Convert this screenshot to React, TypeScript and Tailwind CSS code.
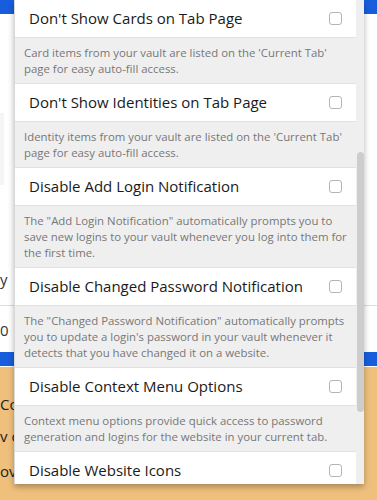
import React from "react";

const rows: { title: string; desc: string[] }[] = [
  {
    title: "Don't Show Cards on Tab Page",
    desc: ["Card items from your vault are listed on the 'Current Tab'", "page for easy auto-fill access."],
  },
  {
    title: "Don't Show Identities on Tab Page",
    desc: ["Identity items from your vault are listed on the 'Current Tab'", "page for easy auto-fill access."],
  },
  {
    title: "Disable Add Login Notification",
    desc: [
      "The \"Add Login Notification\" automatically prompts you to",
      "save new logins to your vault whenever you log into them for",
      "the first time.",
    ],
  },
  {
    title: "Disable Changed Password Notification",
    desc: [
      "The \"Changed Password Notification\" automatically prompts",
      "you to update a login's password in your vault whenever it",
      "detects that you have changed it on a website.",
    ],
  },
  {
    title: "Disable Context Menu Options",
    desc: [
      "Context menu options provide quick access to password",
      "generation and logins for the website in your current tab.",
    ],
  },
  { title: "Disable Website Icons", desc: [] },
];

export default function App() {
  return (
    <div className="relative w-[377px] h-[500px] overflow-hidden bg-white" style={{ fontFamily: '"Open Sans", sans-serif' }}>
      {/* background page */}
      <div className="flex flex-col h-full">
        <div className="h-[14px] bg-[#175ddc] shrink-0" />
        <div className="h-[338px] bg-white flex flex-col text-[15px] text-[#333] shrink-0">
          <div className="h-[99px]" />
          <div className="h-[72px] w-[4px] bg-[#f5f5f5]" />
          <div className="h-[84px]" />
          <div className="h-[20px] leading-[20px]">y</div>
          <div className="h-[16px]" />
          <div className="h-px bg-[#dddddd]" />
          <div className="h-[14px]" />
          <div className="h-[20px] leading-[20px]">0</div>
        </div>
        <div className="h-[14px] bg-[#175ddc] shrink-0" />
        <div className="h-px bg-white shrink-0" />
        <div className="flex-1 min-h-0 overflow-hidden bg-[#efc07c] text-[15px] text-[#222] flex flex-col">
          <div className="h-[27px] shrink-0" />
          <div className="h-[20px] leading-[20px] whitespace-nowrap shrink-0">Con</div>
          <div className="h-[12px] shrink-0" />
          <div className="h-[20px] leading-[20px] whitespace-nowrap shrink-0">v c</div>
          <div className="h-[15px] shrink-0" />
          <div className="h-[20px] leading-[20px] whitespace-nowrap shrink-0">ov</div>
          <div className="h-[16px] shrink-0" />
          <div className="h-[20px] leading-[20px] whitespace-nowrap text-[14px] text-[#444] shrink-0">
            the option to use the auto-fill with the web browser
          </div>
        </div>
      </div>

      {/* popup */}
      <div className="absolute left-[14px] top-0 w-[350px] h-[484px] bg-[#efefef] border-l border-[#d8d8d8] shadow-[0_3px_6px_rgba(0,0,0,0.3)] overflow-hidden flex">
        <div className="w-[341px] flex flex-col">
          {rows.map((r, i) => (
            <div key={i} className="flex flex-col">
              <div className="h-[38px] bg-white border-b border-[#e2e2e2] flex items-center justify-between pl-[14px] pr-[14px] shrink-0">
                <span className="text-[15px] text-[#1a1a1a] whitespace-nowrap">{r.title}</span>
                <span className="w-[13px] h-[13px] border border-[#b5b5b5] rounded-[3px] bg-white" />
              </div>
              {r.desc.length > 0 && (
                <div className="pt-[7px] pb-[6px] pl-[9px] pr-[10px] border-b border-[#e2e2e2] text-[11.4px] leading-[16px] text-[#777777] shrink-0">
                  {r.desc.map((l, j) => (
                    <div key={j} className="whitespace-nowrap">{l}</div>
                  ))}
                </div>
              )}
            </div>
          ))}
        </div>
        <div className="relative w-[9px] bg-[#efefef]">
          <div className="absolute left-[1px] top-[152px] w-[7px] h-[260px] rounded-full bg-[#cdcdcd]" />
        </div>
      </div>
    </div>
  );
}
